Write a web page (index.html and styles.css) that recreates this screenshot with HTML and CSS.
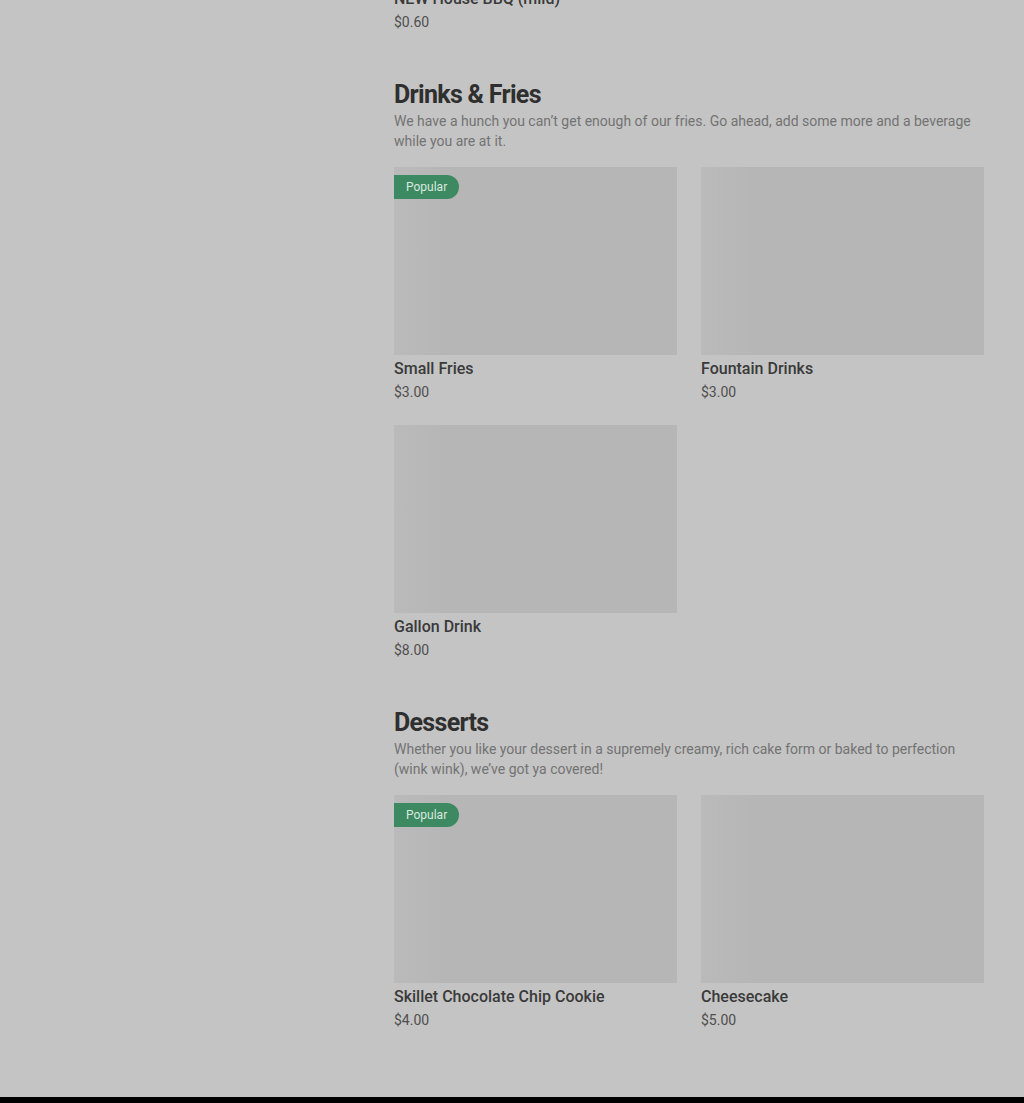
FILE: index.html
```html
<!DOCTYPE html>
<html lang="en">
<head>
    <meta charset="UTF-8">
    <meta name="viewport" content="width=device-width, initial-scale=1.0">
    <title>Menu</title>
    <link rel="stylesheet" href="styles.css">
</head>
<body>
    <div class="page">
        <main class="menu">
            <section class="menu-section menu-section--cut">
                <div class="item-info">
                    <h4>NEW House BBQ (mild)</h4>
                    <span class="price">$0.60</span>
                </div>
            </section>

            <section class="menu-section">
                <h2>Drinks &amp; Fries</h2>
                <p class="section-desc">We have a hunch you can’t get enough of our fries. Go ahead, add some more and a beverage while you are at it.</p>
                <div class="items-grid">
                    <div class="item-card">
                        <div class="item-img"><span class="badge">Popular</span></div>
                        <h4>Small Fries</h4>
                        <span class="price">$3.00</span>
                    </div>
                    <div class="item-card">
                        <div class="item-img"></div>
                        <h4>Fountain Drinks</h4>
                        <span class="price">$3.00</span>
                    </div>
                    <div class="item-card">
                        <div class="item-img"></div>
                        <h4>Gallon Drink</h4>
                        <span class="price">$8.00</span>
                    </div>
                </div>
            </section>

            <section class="menu-section">
                <h2>Desserts</h2>
                <p class="section-desc">Whether you like your dessert in a supremely creamy, rich cake form or baked to perfection (wink wink), we’ve got ya covered!</p>
                <div class="items-grid">
                    <div class="item-card">
                        <div class="item-img"><span class="badge">Popular</span></div>
                        <h4>Skillet Chocolate Chip Cookie</h4>
                        <span class="price">$4.00</span>
                    </div>
                    <div class="item-card">
                        <div class="item-img"></div>
                        <h4>Cheesecake</h4>
                        <span class="price">$5.00</span>
                    </div>
                </div>
            </section>
        </main>
        <footer class="footer"></footer>
    </div>
</body>
</html>
```

FILE: styles.css
```css
:root {
    --bg-color: #c4c4c4;
    --img-color: #b6b6b6;
    --heading-color: #2f2f2f;
    --text-color: #3a3a3a;
    --muted-color: #737373;
    --badge-color: #3d8a62;
}

body {
    margin: 0;
    background-color: var(--bg-color);
    font-family: 'Roboto', 'Inter', sans-serif;
    color: var(--text-color);
}

.page {
    overflow: hidden;
}

.menu {
    width: 590px;
    margin: 0 0 0 394px;
    padding-bottom: 67px;
}

.menu-section {
    margin-bottom: 47px;
}

.menu-section:last-child {
    margin-bottom: 0;
}

.menu-section--cut {
    margin-top: -15px;
}

.menu-section h2 {
    margin: 0;
    font-size: 25px;
    line-height: 32px;
    font-weight: 700;
    letter-spacing: -0.7px;
    color: var(--heading-color);
}

.section-desc {
    margin: 0 0 16px;
    font-size: 14px;
    line-height: 20px;
    color: var(--muted-color);
}

.items-grid {
    display: grid;
    grid-template-columns: repeat(2, 283px);
    column-gap: 24px;
    row-gap: 23px;
}

.item-img {
    position: relative;
    height: 188px;
    background: linear-gradient(90deg, #bababa 0%, #b6b6b6 18%, #b6b6b6 100%);
}

.badge {
    position: absolute;
    top: 8px;
    left: 0;
    height: 24px;
    line-height: 24px;
    padding: 0 12px;
    background-color: var(--badge-color);
    color: #d9e9df;
    font-size: 12px;
    border-radius: 0 12px 12px 0;
}

.item-card h4,
.item-info h4 {
    margin: 2px 0 0;
    font-size: 16px;
    line-height: 24px;
    font-weight: 500;
    color: var(--text-color);
}

.price {
    display: block;
    margin-top: 1px;
    font-size: 14px;
    line-height: 20px;
    color: #4f4f4f;
}

.footer {
    height: 6px;
    background-color: #000;
}
```
